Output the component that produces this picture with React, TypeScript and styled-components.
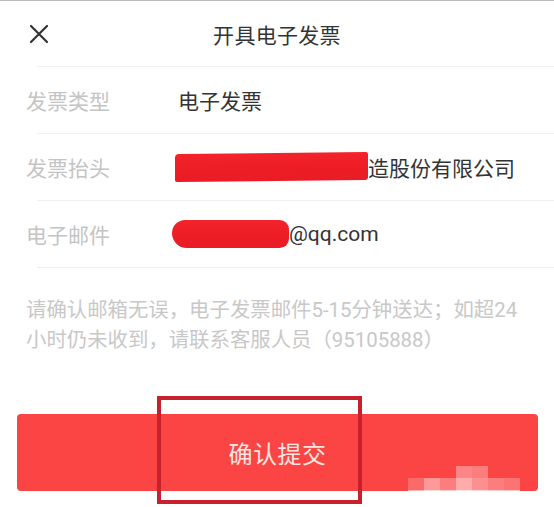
import React from "react";
import styled, { createGlobalStyle } from "styled-components";

const GlobalStyle = createGlobalStyle`
  html, body {
    margin: 0;
    padding: 0;
    background: #ffffff;
  }
  body {
    font-family: Roboto, "Noto Sans CJK SC", sans-serif;
  }
`;

export const Page = styled.div`
  position: relative;
  width: 554px;
  height: 507px;
  box-sizing: border-box;
  border-top: 1px solid #bcbcbc;
  background: #ffffff;
  overflow: hidden;
`;

export const Header = styled.header`
  display: grid;
  grid-template-columns: 1fr auto 1fr;
  align-items: center;
  height: 65px;
  padding-left: 29px;
`;

export const CloseButton = styled.button`
  display: flex;
  align-items: center;
  justify-self: start;
  width: 20px;
  height: 20px;
  padding: 0;
  border: none;
  background: none;
`;

export const Title = styled.h1`
  margin: 0 0 0 -29px;
  font-size: 21px;
  font-weight: 400;
  color: #333333;
  letter-spacing: 0.3px;
`;

export const Divider = styled.div`
  height: 1px;
  margin-left: 37px;
  background: #f0f0f0;
`;

export const Row = styled.div`
  display: flex;
  align-items: center;
  height: 66px;
  padding-left: 26px;
`;

export const Label = styled.span`
  width: 152px;
  flex-shrink: 0;
  font-size: 21px;
  color: #c4c4c4;
`;

export const Value = styled.span`
  display: flex;
  align-items: center;
  font-size: 21px;
  color: #333333;
`;

export const Redaction = styled.span<{ $w: number; $round?: boolean }>`
  display: inline-block;
  width: ${(p) => p.$w}px;
  height: 28px;
  margin-left: ${(p) => (p.$round ? -6 : -3)}px;
  background: linear-gradient(180deg, #f2242b 0%, #ee1c25 55%, #e81d27 100%);
  border-radius: ${(p) => (p.$round ? "14px 10px 10px 16px" : "4px 2px 3px 2px")};
  transform: ${(p) => (p.$round ? "none" : "skewY(-0.6deg)")};
`;

export const Note = styled.p`
  margin: 0;
  padding: 27px 26px 0;
  font-size: 20.4px;
  line-height: 30px;
  color: #c8c8c8;
`;

export const SubmitButton = styled.button`
  display: block;
  width: 521px;
  height: 77px;
  margin: 59px 0 0 17px;
  border: none;
  border-radius: 4px;
  background: #fb4545;
  color: #fde6e1;
  font-family: inherit;
  font-size: 24px;
  letter-spacing: 0.5px;
`;

export const Highlight = styled.div`
  position: absolute;
  left: 157px;
  top: 395px;
  width: 205px;
  height: 108px;
  box-sizing: border-box;
  border: 4px solid #c8202c;
  pointer-events: none;
`;

export const Mosaic = styled.div`
  position: absolute;
  left: 408px;
  top: 465px;
  display: grid;
  grid-template-columns: repeat(7, 16px);
  grid-auto-rows: 12px;
  pointer-events: none;
`;

export const Tile = styled.span<{ $a: number }>`
  background: rgba(255, 255, 255, ${(p) => p.$a});
`;

const mosaic = [
  0, 0, 0, 0.35, 0.3, 0, 0,
  0.2, 0.45, 0.3, 0.55, 0.4, 0.3, 0.25,
  0.6, 0.8, 0.75, 0.85, 0.8, 0.75, 0.7,
];

const CloseIcon = () => (
  <svg width="20" height="20" viewBox="0 0 20 20">
    <path d="M2 2L18 18M18 2L2 18" stroke="#333333" strokeWidth="2.2" strokeLinecap="round" />
  </svg>
);

const App: React.FC = () => {
  return (
    <>
      <GlobalStyle />
      <Page>
        <Header>
          <CloseButton aria-label="关闭">
            <CloseIcon />
          </CloseButton>
          <Title>开具电子发票</Title>
        </Header>
        <Divider />
        <Row>
          <Label>发票类型</Label>
          <Value>电子发票</Value>
        </Row>
        <Divider />
        <Row>
          <Label>发票抬头</Label>
          <Value>
            <Redaction $w={193} />
            造股份有限公司
          </Value>
        </Row>
        <Divider />
        <Row>
          <Label>电子邮件</Label>
          <Value>
            <Redaction $w={117} $round />
            @qq.com
          </Value>
        </Row>
        <Divider />
        <Note>
          请确认邮箱无误，电子发票邮件5-15分钟送达；如超24小时仍未收到，请联系客服人员（95105888）
        </Note>
        <SubmitButton>确认提交</SubmitButton>
        <Highlight />
        <Mosaic>
          {mosaic.map((a, i) => (
            <Tile key={i} $a={a} />
          ))}
        </Mosaic>
      </Page>
    </>
  );
};

export default App;
